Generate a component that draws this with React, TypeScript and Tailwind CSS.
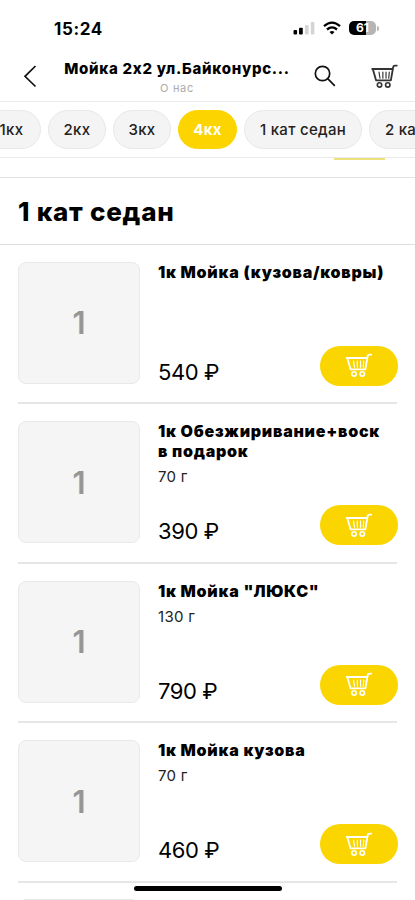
import { clsx } from 'clsx';
import React from 'react';

const categories = [
  { label: '1кх', width: 'w-[59px]' },
  { label: '2кх', width: 'w-[58px]' },
  { label: '3кх', width: 'w-[58px]' },
  { label: '4кх', width: 'w-[59px]', active: true },
  { label: '1 кат седан', width: 'w-[118px]' },
  { label: '2 кат седан', width: 'w-[121px]' },
];

const services = [
  { title: '1к Мойка (кузова/ковры)', price: 540 },
  { title: '1к Обезжиривание+воск в подарок', weight: '70 г', price: 390 },
  { title: '1к Мойка "ЛЮКС"', weight: '130 г', price: 790 },
  { title: '1к Мойка кузова', weight: '70 г', price: 460 },
];

function CartIcon({ className }: { className?: string }) {
  return (
    <svg
      viewBox="0 0 28 26"
      className={className}
      fill="none"
      stroke="currentColor"
      strokeWidth={1.9}
      strokeLinecap="round"
      strokeLinejoin="round"
    >
      <path d="M1.2 5.2H22.2M2 5.6l3.2 11.4h15.4L23 3.4q.3-1.8 1.8-1.8h2" />
      <path d="M8.3 8.4l1 6.4M12.3 8.4v6.4M15.6 8.4v6.4M19 8.4l-.6 6.4" strokeWidth={1.2} />
      <circle cx="8.8" cy="21.8" r="2.3" strokeWidth={1.7} />
      <circle cx="17.4" cy="21.8" r="2.3" strokeWidth={1.7} />
    </svg>
  );
}

function StatusBar() {
  return (
    <div className="flex h-[52px] shrink-0 items-start justify-between pl-[54px] pr-[36px] pt-[19px]">
      <span className="text-[17px] font-bold leading-[20px] tracking-[0.6px]">15:24</span>
      <div className="flex items-center gap-2 pt-[2px]">
        <svg width="22" height="14" viewBox="0 0 22 14">
          <rect x="0.5" y="9" width="3.6" height="4.5" rx="1" />
          <rect x="6" y="6.8" width="3.8" height="6.7" rx="1" />
          <rect x="12" y="4" width="3.6" height="9.5" rx="1" fill="#d4d4d4" />
          <rect x="17.8" y="1" width="3.6" height="12.5" rx="1" fill="#d4d4d4" />
        </svg>
        <svg width="18" height="14" viewBox="0 0 18 14" fill="none" stroke="#000" strokeWidth="2.3">
          <path d="M1 5.1q8-7 16 0M4 8.5q5-4.2 10 0" />
          <path d="M6.5 11q2.5-2 5 0L9 13.6z" fill="#000" stroke="none" />
        </svg>
        <div className="flex items-center">
          <div className="flex h-[14px] w-[27px] items-center justify-center rounded-[5px] bg-[linear-gradient(90deg,#000_62%,#b5b5b5_62%)] text-[12px] font-bold leading-none text-white">
            61
          </div>
          <div className="ml-px h-[5px] w-[2px] rounded-r-full bg-[#b5b5b5]" />
        </div>
      </div>
    </div>
  );
}

function Header() {
  return (
    <div className="flex h-[50px] shrink-0 border-b border-[#e9e9e9]">
      <svg width="64" height="49" viewBox="0 0 64 49" fill="none" stroke="#111" strokeWidth="1.7" className="shrink-0">
        <path d="M35.5 14L25 24.3L35.5 34.5" />
      </svg>
      <div className="flex w-[226px] shrink-0 flex-col items-center pt-[7px]">
        <div className="whitespace-nowrap text-[15px] font-extrabold leading-[20px] tracking-[0.72px]">
          Мойка 2х2 ул.Байконурс...
        </div>
        <div className="text-[11px] leading-[18px] tracking-[0.7px] text-[#ababab]">О нас</div>
      </div>
      <svg width="24" height="24" viewBox="0 0 24 24" fill="none" stroke="#111" strokeWidth="1.7" className="ml-[23px] mt-[12px] shrink-0">
        <circle cx="9.5" cy="9.5" r="7.2" />
        <path d="M14.7 14.7L21.8 21.8" />
      </svg>
      <CartIcon className="ml-[34px] mt-[12px] h-[25px] w-[27px] shrink-0 text-[#333]" />
    </div>
  );
}

function CategoryTabs() {
  return (
    <div className="flex h-[56px] shrink-0 items-center overflow-hidden border-b border-[#e9e9e9]">
      <div className="-ml-[18px] flex gap-[7px]">
        {categories.map((category) => (
          <div
            key={category.label}
            className={clsx(
              'flex h-[39px] shrink-0 items-center justify-center whitespace-nowrap rounded-full border pt-[2px] text-[15px] tracking-[0.3px]',
              category.width,
              category.active
                ? 'border-[#fcd500] bg-[#fcd500] font-bold text-white'
                : 'border-[#e8e8e8] bg-[#f4f4f4] font-medium text-[#222]',
            )}
          >
            {category.label}
          </div>
        ))}
      </div>
    </div>
  );
}

function ServiceRow({ service }: { service: (typeof services)[number] }) {
  return (
    <div className="mx-[18px] flex h-[159.5px] gap-[18px] border-b-2 border-[#e6e6e6] pt-[17px]">
      <div className="flex size-[122px] shrink-0 items-center justify-center rounded-[8px] border border-[#e9e9e9] bg-[#f5f5f5] pt-[2px] text-[31px] font-semibold text-[#969696]">
        1
      </div>
      <div className="flex h-[124px] flex-1 flex-col">
        <div className="w-[229px] text-[16px] font-black leading-[20px] tracking-[0.75px]">{service.title}</div>
        {service.weight && (
          <div className="mt-[6px] text-[15px] leading-[20px] tracking-[0.3px] text-[#222]">{service.weight}</div>
        )}
        <div className="-mr-px mt-auto flex items-end justify-between">
          <span className="text-[22px] leading-[28px] tracking-[-0.4px]">{service.price} ₽</span>
          <button className="flex h-[40px] w-[78px] items-center justify-center rounded-full bg-[#fad500] text-white">
            <CartIcon className="h-[25px] w-[28px]" />
          </button>
        </div>
      </div>
    </div>
  );
}

export default function App() {
  return (
    <div className="relative flex h-[900px] w-[415px] flex-col overflow-hidden bg-white font-['Inter','Liberation_Sans',sans-serif] text-black">
      <StatusBar />
      <Header />
      <CategoryTabs />
      <div className="h-[20px] shrink-0 border-b border-[#e3e3e3]">
        <div className="ml-[334px] h-[2px] w-[51px] bg-[#ece27c]" />
      </div>
      <h1 className="flex h-[66.5px] shrink-0 items-center border-b border-[#dedede] pl-[18px] pt-px text-[26px] font-extrabold tracking-[0.75px]">
        1 кат седан
      </h1>
      <div className="shrink-0">
        {services.map((service) => (
          <ServiceRow key={service.title} service={service} />
        ))}
        <div className="ml-[18px] mt-[16px] h-[122px] w-[122px] rounded-[8px] border border-[#e9e9e9] bg-[#f5f5f5]" />
      </div>
      <div className="absolute left-[134px] top-[886px] h-[5px] w-[148px] rounded-full bg-black" />
    </div>
  );
}
